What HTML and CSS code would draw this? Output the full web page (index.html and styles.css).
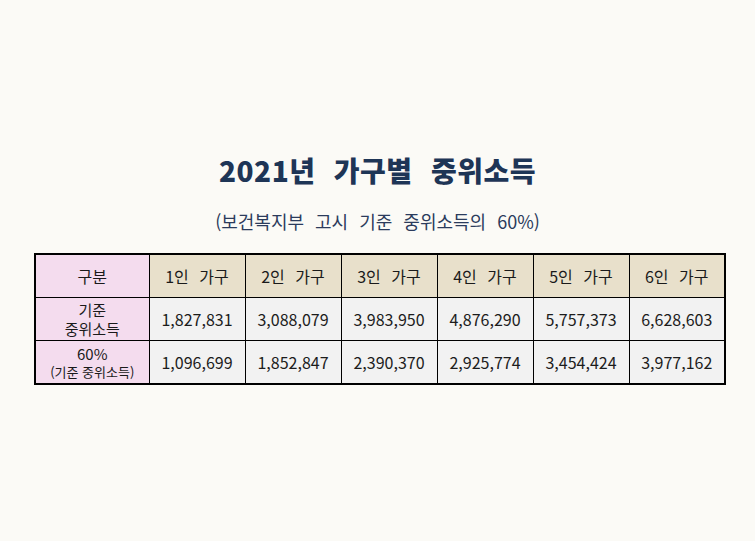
FILE: index.html
```html
<!DOCTYPE html>
<html lang="ko">
<head>
<meta charset="utf-8">
<title>2021년 가구별 중위소득</title>
<link rel="stylesheet" href="styles.css">
</head>
<body>
<main class="page">
  <h1 class="title">2021년 가구별 중위소득</h1>
  <p class="subtitle">(보건복지부 고시 기준 중위소득의 60%)</p>
  <table class="income">
    <colgroup>
      <col class="c-head">
      <col class="c-data"><col class="c-data"><col class="c-data">
      <col class="c-data"><col class="c-data"><col class="c-data">
    </colgroup>
    <thead>
      <tr class="r-head">
        <th class="label">구분</th>
        <th>1인 가구</th>
        <th>2인 가구</th>
        <th>3인 가구</th>
        <th>4인 가구</th>
        <th>5인 가구</th>
        <th>6인 가구</th>
      </tr>
    </thead>
    <tbody>
      <tr class="r-one">
        <th class="label two-line"><span class="ln">기준</span><span class="ln">중위소득</span></th>
        <td>1,827,831</td>
        <td>3,088,079</td>
        <td>3,983,950</td>
        <td>4,876,290</td>
        <td>5,757,373</td>
        <td>6,628,603</td>
      </tr>
      <tr class="r-two">
        <th class="label two-line"><span class="ln">60%</span><span class="ln small">(기준 중위소득)</span></th>
        <td>1,096,699</td>
        <td>1,852,847</td>
        <td>2,390,370</td>
        <td>2,925,774</td>
        <td>3,454,424</td>
        <td>3,977,162</td>
      </tr>
    </tbody>
  </table>
</main>
</body>
</html>
```
FILE: styles.css
```css
html, body {
  margin: 0;
  padding: 0;
  background: #fbfaf6;
}
.page {
  width: 755px;
  height: 541px;
  display: flex;
  flex-direction: column;
  align-items: center;
  font-family: "Noto Sans CJK KR", "Noto Sans", sans-serif;
  color: #1a1a1a;
}
.title {
  margin: 150px 0 0 0;
  font-size: 28px;
  font-weight: 900;
  line-height: 40px;
  color: #1e3556;
  word-spacing: 10px;
  letter-spacing: 0.5px;
}
.subtitle {
  margin: 19px 0 0 0;
  font-size: 18px;
  line-height: 24px;
  color: #2b3b5c;
  word-spacing: 6px;
}
.income {
  align-self: flex-start;
  margin: 20px 0 0 34px;
  border-collapse: collapse;
  table-layout: fixed;
  width: 692px;
  border: 2px solid #000;
  font-size: 16px;
}
.c-head { width: 114px; }
.c-data { width: 96px; }
.income th, .income td {
  border: 1px solid #000;
  text-align: center;
  vertical-align: middle;
  padding: 0;
  font-weight: 400;
  line-height: 19px;
}
.income td {
  background: #f2f2f2;
  color: #1c1c1c;
}
.r-head th {
  background: #e8e0cb;
  height: 42px;
  word-spacing: 6px;
}
.r-one td, .r-one th { height: 42px; }
.r-two td, .r-two th { height: 42px; }
.income .label {
  background: #f4dcee;
}
.ln {
  display: block;
  font-size: 15px;
  line-height: 19px;
}
.ln.small {
  font-size: 13px;
  line-height: 18px;
}
```
